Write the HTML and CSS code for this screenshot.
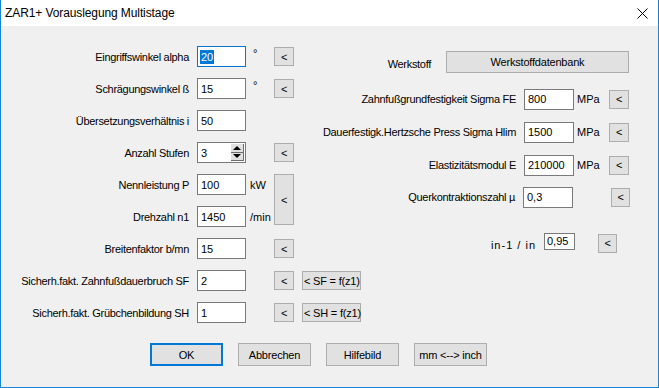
FILE: index.html
```html
<!DOCTYPE html>
<html>
<head>
    <title>ZAR1+ Vorauslegung Multistage</title>
    <link rel="stylesheet" href="styles.css">
</head>
<body>
<div class="window">
    <div class="titlebar">
        <span class="title">ZAR1+ Vorauslegung Multistage</span>
        <svg class="close" width="11" height="11" viewBox="0 0 11 11">
            <path d="M0.5 0.5 L10.5 10.5 M10.5 0.5 L0.5 10.5" stroke="#000" stroke-width="1" fill="none"/>
        </svg>
    </div>

    <div class="content">
        <div class="panels">
            <!-- linke Spalte -->
            <div class="left-panel">
                <span class="lbl">Eingriffswinkel alpha</span>
                <div class="edit c-edit focus"><span class="sel">20</span></div>
                <span class="unit c-unit deg">°</span>
                <button class="small c-btn">&lt;</button>

                <span class="lbl">Schrägungswinkel ß</span>
                <div class="edit c-edit">15</div>
                <span class="unit c-unit deg">°</span>
                <button class="small c-btn">&lt;</button>

                <span class="lbl">Übersetzungsverhältnis i</span>
                <div class="edit c-edit">50</div>

                <span class="lbl">Anzahl Stufen</span>
                <div class="edit c-edit">3
                    <div class="spin">
                        <div class="spin-up"><i class="tri-up"></i></div>
                        <div class="spin-down"><i class="tri-down"></i></div>
                    </div>
                </div>
                <button class="small c-btn">&lt;</button>

                <span class="lbl">Nennleistung P</span>
                <div class="edit c-edit">100</div>
                <span class="unit c-unit">kW</span>
                <button class="small c-btn tall">&lt;</button>

                <span class="lbl">Drehzahl n1</span>
                <div class="edit c-edit">1450</div>
                <span class="unit c-unit">/min</span>

                <span class="lbl">Breitenfaktor b/mn</span>
                <div class="edit c-edit">15</div>
                <button class="small c-btn">&lt;</button>

                <span class="lbl">Sicherh.fakt. Zahnfußdauerbruch SF</span>
                <div class="edit c-edit">2</div>
                <button class="small c-btn">&lt;</button>
                <button class="small c-extra">&lt; SF = f(z1)</button>

                <span class="lbl">Sicherh.fakt. Grübchenbildung SH</span>
                <div class="edit c-edit">1</div>
                <button class="small c-btn">&lt;</button>
                <button class="small c-extra">&lt; SH = f(z1)</button>
            </div>

            <!-- rechte Spalte -->
            <div class="right-panel">
                <div class="rrow r1">
                    <span class="lbl werk">Werkstoff</span>
                    <button class="btn wide">Werkstoffdatenbank</button>
                </div>
                <div class="rrow r2">
                    <span class="lbl">Zahnfußgrundfestigkeit Sigma FE</span>
                    <div class="edit w50">800</div>
                    <span class="runit">MPa</span>
                    <button class="small">&lt;</button>
                </div>
                <div class="rrow r3">
                    <span class="lbl">Dauerfestigk.Hertzsche Press Sigma Hlim</span>
                    <div class="edit w50">1500</div>
                    <span class="runit">MPa</span>
                    <button class="small">&lt;</button>
                </div>
                <div class="rrow r4">
                    <span class="lbl">Elastizitätsmodul E</span>
                    <div class="edit w50">210000</div>
                    <span class="runit">MPa</span>
                    <button class="small">&lt;</button>
                </div>
                <div class="rrow r5">
                    <span class="lbl">Querkontraktionszahl µ</span>
                    <div class="edit w50">0,3</div>
                    <span class="runit wider"></span>
                    <button class="small shift">&lt;</button>
                </div>
                <div class="rrow r6">
                    <span class="lbl spaced">in-1 / in</span>
                    <div class="edit mini">0,95</div>
                    <button class="small last">&lt;</button>
                </div>
            </div>
        </div>

        <div class="actions">
            <button class="btn default">OK</button>
            <button class="btn">Abbrechen</button>
            <button class="btn">Hilfebild</button>
            <button class="btn">mm &lt;--&gt; inch</button>
        </div>
    </div>
</div>
</body>
</html>
```

FILE: styles.css
```css
body {
    margin: 0;
    padding: 0;
    font-family: "Liberation Sans", Arial, sans-serif;
    font-size: 11px;
    color: #000;
    background-color: #f0f0f0;
}

.window {
    box-sizing: border-box;
    width: 659px;
    height: 388px;
    border: 1px solid #1883d7;
    border-top: none;
    background-color: #f0f0f0;
    display: flex;
    flex-direction: column;
}

.titlebar {
    height: 26px;
    background-color: #ffffff;
    display: flex;
    align-items: center;
    justify-content: space-between;
    padding: 0 10px 0 4px;
    flex-shrink: 0;
}

.title {
    font-size: 12px;
    letter-spacing: -0.1px;
}

.close {
    display: block;
}

.content {
    padding-top: 20px;
}

.panels {
    display: flex;
}

.lbl {
    white-space: nowrap;
    letter-spacing: -0.3px;
}

/* linke Spalte */
.left-panel {
    flex-shrink: 0;
    width: 359px;
    display: grid;
    grid-template-columns: 196px 49px 28px 28px 58px;
    grid-auto-rows: 21px;
    row-gap: 11px;
    align-items: center;
}

.left-panel .lbl {
    grid-column: 1;
    text-align: right;
    padding-right: 8px;
}

.c-edit { grid-column: 2; }
.c-unit { grid-column: 3; }
.c-btn { grid-column: 4; }
.c-extra { grid-column: 5; }

.unit {
    padding-left: 4px;
}

.unit.deg {
    padding-left: 7px;
    align-self: start;
    margin-top: 1px;
}

.edit {
    box-sizing: border-box;
    height: 21px;
    border: 1px solid #7a7a7a;
    background-color: #ffffff;
    display: flex;
    align-items: center;
    padding-left: 3px;
    white-space: nowrap;
}

.edit.focus {
    border-color: #0078d7;
    padding-left: 2px;
}

.sel {
    background-color: #0078d7;
    color: #ffffff;
    padding: 1px 1px;
}

.spin {
    margin-left: auto;
    margin-right: 1px;
    width: 13px;
    height: 17px;
    display: flex;
    flex-direction: column;
}

.spin-up,
.spin-down {
    flex: 1;
    background-color: #e1e1e1;
    border-right: 1px solid #6d6d6d;
    border-bottom: 1px solid #6d6d6d;
    box-sizing: border-box;
    display: flex;
    align-items: center;
    justify-content: center;
}

.tri-up {
    width: 0;
    height: 0;
    border-left: 4px solid transparent;
    border-right: 4px solid transparent;
    border-bottom: 4px solid #000;
}

.tri-down {
    width: 0;
    height: 0;
    border-left: 4px solid transparent;
    border-right: 4px solid transparent;
    border-top: 4px solid #000;
}

button {
    font-family: inherit;
    font-size: 11px;
    color: #000;
    margin: 0;
    padding: 0;
    box-sizing: border-box;
    background-color: #e1e1e1;
    border: 1px solid #adadad;
    border-radius: 0;
    letter-spacing: -0.2px;
}

.small {
    width: 20px;
    height: 19px;
}

.small.tall {
    grid-row: span 2;
    height: 51px;
    align-self: start;
}

.c-extra {
    width: 59px;
    padding-left: 1px;
    text-align: left;
    white-space: nowrap;
}

/* rechte Spalte */
.right-panel {
    flex: 1;
    min-width: 0;
    padding-right: 29px;
    display: flex;
    flex-direction: column;
}

.rrow {
    display: flex;
    align-items: center;
    justify-content: flex-end;
    height: 22px;
}

.rrow > * {
    flex-shrink: 0;
}

.rrow .lbl {
    margin-right: 8px;
}

.rrow .werk {
    margin-right: 15px;
    margin-top: 3px;
}

.r1 { margin-top: 5px; }
.r2 { margin-top: 15px; }
.r3 { margin-top: 11px; }
.r4 { margin-top: 11px; }
.r5 { margin-top: 10px; }
.r6 { margin-top: 24px; }

.w50 {
    width: 50px;
}

.runit {
    box-sizing: border-box;
    width: 35px;
    padding-left: 3px;
}

.runit.wider {
    width: 38px;
}

.small.shift {
    width: 19px;
    margin-right: -1px;
}

.spaced {
    letter-spacing: 1px;
    margin-top: 3px;
}

.edit.mini {
    width: 31px;
    height: 17px;
    margin-top: -4px;
    padding-left: 2px;
}

.small.last {
    width: 19px;
    margin-left: 23px;
    margin-right: 12px;
}

.btn {
    height: 23px;
}

.btn.wide {
    width: 183px;
    height: 22px;
}

/* Schaltflächen unten */
.actions {
    display: flex;
    gap: 15px;
    padding-left: 149px;
    margin-top: 20px;
}

.actions .btn {
    width: 73px;
}

.btn.default {
    border: 2px solid #0078d7;
}
```
